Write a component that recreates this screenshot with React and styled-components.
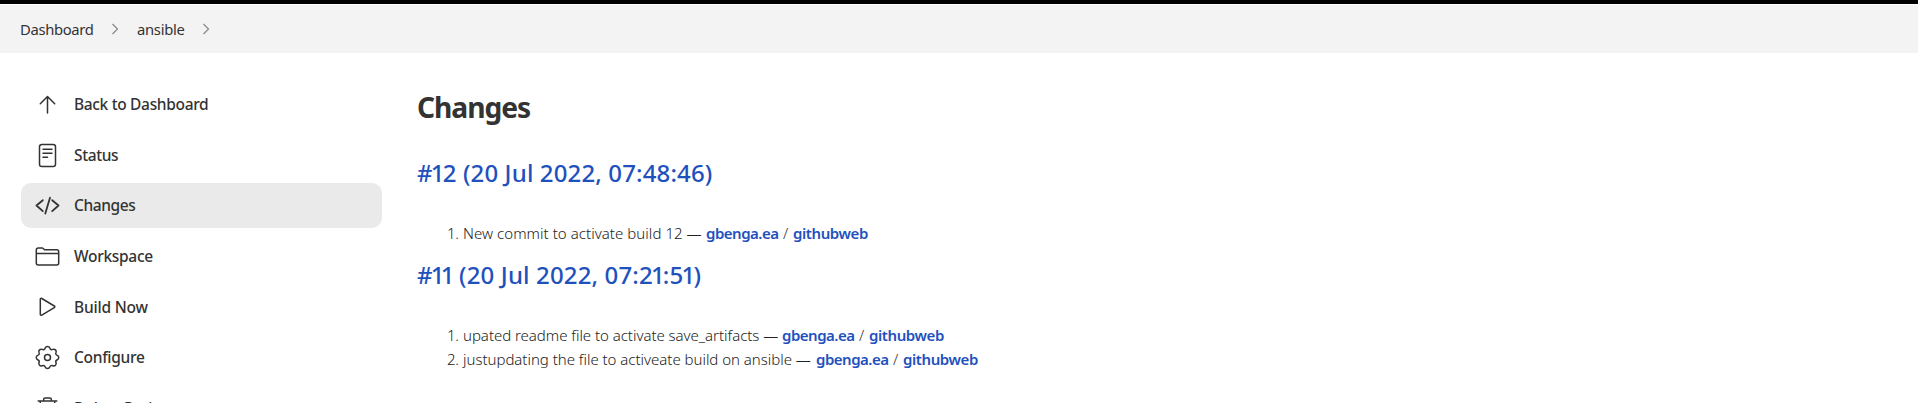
import React from "react";
import styled, { createGlobalStyle } from "styled-components";

const Global = createGlobalStyle`
  *{box-sizing:border-box}
  html,body{margin:0;height:100%;overflow:hidden;background:#fff}
  body{font-family:"Noto Sans","Open Sans",sans-serif;color:#333}
`;
const Page = styled.div`height:403px;overflow:hidden;`;
const Header = styled.div`height:4px;background:#000;`;
const Crumbs = styled.nav`
  display:flex;align-items:center;height:48px;margin-top:1px;padding-left:20px;background:#f3f3f3;
`;
const Crumb = styled.span`
  font-size:14.8px;line-height:20px;letter-spacing:${p => p.$ls}px;width:${p => p.$w}px;white-space:nowrap;
`;
const Chevron = styled.svg`width:8px;height:12px;margin:0 18px;flex:none;`;
const Layout = styled.div`display:flex;`;
const Side = styled.aside`
  display:flex;flex-direction:column;gap:5.6px;width:361px;margin:29px 35px 0 21px;flex:none;
`;
const Task = styled.a`
  display:flex;align-items:center;height:45px;flex:none;padding-left:14px;gap:14px;border-radius:10px;
  background:${p => (p.$active ? "#eaeaea" : "transparent")};
`;
const TaskLabel = styled.span`
  font-size:15.5px;font-weight:500;line-height:22px;padding-bottom:1px;letter-spacing:${p => p.$ls}px;white-space:nowrap;
  ${Task}:nth-child(n+5) &{padding:0;}
  ${Task}:nth-child(6) &{padding-bottom:1px;}
`;
const Icon = styled.svg`
  width:25px;height:25px;flex:none;fill:none;stroke:#333;stroke-width:1.5;stroke-linecap:round;stroke-linejoin:round;
`;
const Main = styled.main`padding-top:32px;`;
const Title = styled.h1`
  margin:0;font-size:28.2px;font-weight:700;line-height:44px;letter-spacing:-1.05px;
`;
const Build = styled.h2`
  margin:${p => p.$top}px 0 0;font-size:24px;font-weight:500;line-height:36px;color:#1f51bd;letter-spacing:0.13px;
`;
const NarrowOne = styled.span`margin-left:-1.9px;letter-spacing:-1.8px;`;
const List = styled.ol`margin:${p => p.$top}px 0 0;padding:0 0 0 30px;list-style:none;`;
const Row = styled.li`display:flex;font-size:15px;line-height:24px;white-space:nowrap;`;
const Num = styled.span`width:16px;font-weight:300;letter-spacing:-0.3px;color:#222;`;
const Msg = styled.span`width:${p => p.$w}px;font-weight:300;letter-spacing:${p => p.$ls}px;color:#222;`;
const Slash = styled.span`width:14px;padding-left:4px;font-weight:300;`;
const Link = styled.a`color:#1f51bd;font-weight:600;width:${p => p.$w}px;letter-spacing:${p => p.$ls}px;`;

const icons = {
  up: <path d="M12.5 21V5M5.3 11.8l7.2-7.3 7.2 7.3" />,
  status: <><rect x="4.5" y="1.5" width="16" height="22" rx="2.3" /><path d="M8 6.2h9M8 10.2h9M8 14.2h4.5" /></>,
  code: <path strokeWidth="1.8" d="M7.8 7.2L1.5 12.5l6.3 5.6M15 4.7l-4.7 15.9M17.2 7.2l6.3 5.3-6.3 5.6" />,
  folder: <path d="M1.3 9.5V6c0-1.2.8-2 2-2h4.2l2.3 1.8h11.9c1.2 0 2 .8 2 2V19c0 1.2-.8 2-2 2H3.3c-1.2 0-2-.8-2-2V9.5h22.4" />,
  play: <path d="M5.3 5.3v15c0 .8.8 1.2 1.5.8l12.5-7.5c.7-.4.7-1.2 0-1.600L6.800 4.500c-.7-.4-1.500 0-1.500.8z" />,
  gear: <><circle cx="12.5" cy="12.500" r="3" /><path d="M10.200 3c.7-2 3.900-2 4.600 0 .5 1.500 1.600 2 3 1.400 2-.9 4 1.100 3.200 3.100-.6 1.400-.1 2.300 1.300 2.900 1.900.8 1.900 3.500 0 4.300-1.400.6-1.900 1.500-1.300 2.900.8 2-1.200 4-3.200 3.100-1.400-.6-2.500-.1-3 1.400-.7 2-3.900 2-4.600 0-.5-1.500-1.600-2-3-1.400-2 .9-4-1.100-3.200-3.100.6-1.400.1-2.300-1.300-2.900-1.900-.8-1.900-3.500 0-4.300C4.100 9.800 4.600 8.900 4 7.500c-.8-2 1.200-4 3.200-3.100 1.400.6 2.500.1 3-1.400z" /></>,
  trash: <path d="M3.200 5h18.600M8.700 5V3.300c0-.8.6-1.400 1.400-1.400h4.800c.8 0 1.400.6 1.400 1.400V5M5.200 5l1 16c.1 1.200.9 2 2 2h8.600c1.100 0 1.900-.8 2-2l1-16M9 9l.4 10M12.500 9v10M16 9l-.4 10" />,
};
const tasks = [
  ["up", "Back to Dashboard", -0.33], ["status", "Status", -0.4], ["code", "Changes", -0.4], ["folder", "Workspace", -0.3],
  ["play", "Build Now", -0.2], ["gear", "Configure", -0.3], ["trash", "Delete Project", -0.3],
];
const Arrow = () => <Chevron viewBox="0 0 8 12"><path d="M1.500 1l5 5-5 5" fill="none" stroke="#888" strokeWidth="1.200" /></Chevron>;

function BuildTitle({ top, text }) {
  return <Build $top={top}>{text.split(/(1)/).map((t, i) => (t === "1" ? <NarrowOne key={i}>1</NarrowOne> : t))}</Build>;
}

function Commit({ n, msg, w, ls }) {
  return (
    <Row>
      <Num>{n}.</Num><Msg $w={w} $ls={ls}>{msg} —</Msg>
      <Link $w={73} $ls={-0.5}>gbenga.ea</Link><Slash>/</Slash><Link $w={75} $ls={-0.4}>githubweb</Link>
    </Row>
  );
}

export default function App() {
  return (
    <Page>
      <Global />
      <Header />
      <Crumbs>
        <Crumb $w={73} $ls={-0.35}>Dashboard</Crumb><Arrow />
        <Crumb $w={47} $ls={-0.3}>ansible</Crumb><Arrow />
      </Crumbs>
      <Layout>
        <Side>
          {tasks.map(([icon, label, ls]) => (
            <Task key={label} $active={icon === "code"}>
              <Icon viewBox="0 0 25 25">{icons[icon]}</Icon><TaskLabel $ls={ls}>{label}</TaskLabel>
            </Task>
          ))}
        </Side>
        <Main>
          <Title>Changes</Title>
          <BuildTitle top={26} text="#12 (20 Jul 2022, 07:48:46)" />
          <List $top={30}><Commit n={1} msg="New commit to activate build 12" w={243} ls={0.05} /></List>
          <BuildTitle top={12} text="#11 (20 Jul 2022, 07:21:51)" />
          <List $top={30}>
            <Commit n={1} msg="upated readme file to activate save_artifacts" w={319} ls={-0.03} />
            <Commit n={2} msg="justupdating the file to activeate build on ansible" w={353} ls={-0.02} />
          </List>
        </Main>
      </Layout>
    </Page>
  );
}
